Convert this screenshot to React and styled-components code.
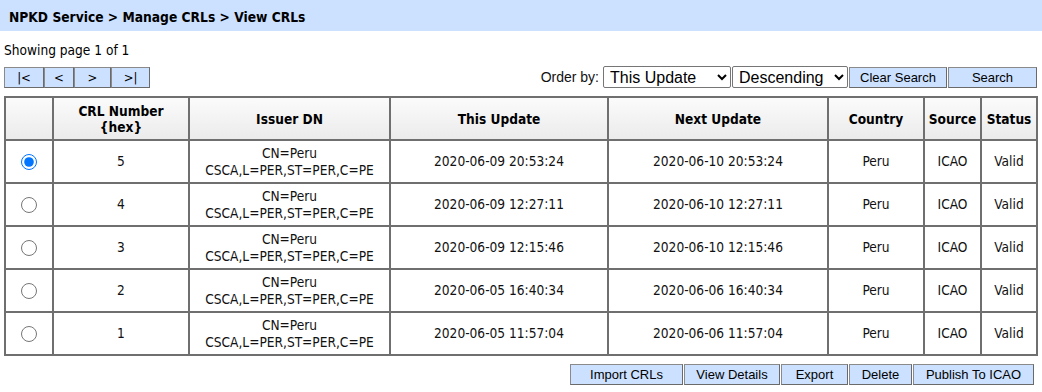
import React, { useState } from 'react';
import styled, { createGlobalStyle } from 'styled-components';

const GlobalStyle = createGlobalStyle`
  body {
    margin: 0;
    background: #fff;
    font-family: "DejaVu Sans Condensed", "DejaVu Sans", sans-serif;
    font-size: 13.6px;
    color: #000;
  }
`;

const rows = [
  { id: 5, issuer: ['CN=Peru', 'CSCA,L=PER,ST=PER,C=PE'], thisUpd: '2020-06-09 20:53:24', nextUpd: '2020-06-10 20:53:24' },
  { id: 4, issuer: ['CN=Peru', 'CSCA,L=PER,ST=PER,C=PE'], thisUpd: '2020-06-09 12:27:11', nextUpd: '2020-06-10 12:27:11' },
  { id: 3, issuer: ['CN=Peru', 'CSCA,L=PER,ST=PER,C=PE'], thisUpd: '2020-06-09 12:15:46', nextUpd: '2020-06-10 12:15:46' },
  { id: 2, issuer: ['CN=Peru', 'CSCA,L=PER,ST=PER,C=PE'], thisUpd: '2020-06-05 16:40:34', nextUpd: '2020-06-06 16:40:34' },
  { id: 1, issuer: ['CN=Peru', 'CSCA,L=PER,ST=PER,C=PE'], thisUpd: '2020-06-05 11:57:04', nextUpd: '2020-06-06 11:57:04' },
];

const columns = [
  { key: 'sel', label: '', width: 48 },
  { key: 'num', label: <>CRL Number<br />{'{hex}'}</>, width: 136 },
  { key: 'issuer', label: 'Issuer DN', width: 201 },
  { key: 'this', label: 'This Update', width: 218 },
  { key: 'next', label: 'Next Update', width: 220 },
  { key: 'country', label: 'Country', width: 96 },
  { key: 'source', label: 'Source', width: 57 },
  { key: 'status', label: 'Status', width: 56 },
];

function App() {
  const [selected, setSelected] = useState(5);

  return (
    <Page>
      <GlobalStyle />
      <TitleBar>NPKD Service &gt; Manage CRLs &gt; View CRLs</TitleBar>

      <PageInfo>Showing page 1 of 1</PageInfo>

      <Toolbar>
        <Pager>
          <BlueButton $w={40} $tight>|&lt;</BlueButton>
          <BlueButton $w={30} $tight>&lt;</BlueButton>
          <BlueButton $w={37} $tight>&gt;</BlueButton>
          <BlueButton $w={39} $tight>&gt;|</BlueButton>
        </Pager>
        <OrderBox>
          <OrderLabel>Order by:</OrderLabel>
          <Select $w={128} defaultValue="this">
            <option value="this">This Update</option>
            <option value="next">Next Update</option>
            <option value="num">CRL Number</option>
          </Select>
          <Select $w={116} defaultValue="desc">
            <option value="desc">Descending</option>
            <option value="asc">Ascending</option>
          </Select>
          <BlueButton $w={98}>Clear Search</BlueButton>
          <BlueButton $w={89}>Search</BlueButton>
        </OrderBox>
      </Toolbar>

      <Table>
        <colgroup>
          {columns.map((c) => (
            <col key={c.key} style={{ width: c.width }} />
          ))}
        </colgroup>
        <thead>
          <tr>
            {columns.map((c) => (
              <Th key={c.key}>{c.label}</Th>
            ))}
          </tr>
        </thead>
        <tbody>
          {rows.map((r) => (
            <tr key={r.id}>
              <Td>
                <Radio
                  type="radio"
                  name="crl"
                  checked={selected === r.id}
                  onChange={() => setSelected(r.id)}
                />
              </Td>
              <Td>{r.id}</Td>
              <Td>
                {r.issuer[0]}
                <br />
                {r.issuer[1]}
              </Td>
              <Td>{r.thisUpd}</Td>
              <Td>{r.nextUpd}</Td>
              <Td>Peru</Td>
              <Td>ICAO</Td>
              <Td>Valid</Td>
            </tr>
          ))}
        </tbody>
      </Table>

      <Actions>
        <BlueButton $w={113}>Import CRLs</BlueButton>
        <BlueButton $w={96}>View Details</BlueButton>
        <BlueButton $w={67}>Export</BlueButton>
        <BlueButton $w={63}>Delete</BlueButton>
        <BlueButton $w={121}>Publish To ICAO</BlueButton>
      </Actions>
    </Page>
  );
}

export default App;

const Page = styled.div`
  width: 1042px;
`;

const TitleBar = styled.div`
  height: 31px;
  background: #cce0ff;
  font-weight: bold;
  font-size: 13.7px;
  line-height: 34px;
  padding-left: 9px;
  color: #000;
`;

const PageInfo = styled.div`
  padding: 11px 4px 0;
  height: 17px;
  line-height: 17px;
`;

const Toolbar = styled.div`
  display: flex;
  justify-content: space-between;
  align-items: center;
  padding: 7px 5px 0 4px;
`;

const Pager = styled.div`
  display: flex;
`;

const OrderBox = styled.div`
  display: flex;
  align-items: center;
`;

const OrderLabel = styled.span`
  font-family: "Liberation Sans", Arial, sans-serif;
  font-size: 14px;
  margin-right: 4px;
  color: #111;
`;

const BlueButton = styled.button`
  width: ${(p) => p.$w}px;
  height: 21px;
  margin: 0 ${(p) => (p.$tight ? 0 : 1)}px 0 0;
  padding: 0;
  background: #cce0ff;
  border: 1px solid;
  border-color: #8a8a8a #6a6a6a #6a6a6a #8a8a8a;
  font-family: ${(p) =>
    p.$tight ? '"DejaVu Sans Condensed", "DejaVu Sans", sans-serif' : '"Liberation Sans", Arial, sans-serif'};
  font-size: 13px;
  color: #000;
  cursor: pointer;
  &:last-child {
    margin-right: 0;
  }
`;

const Select = styled.select`
  width: ${(p) => p.$w}px;
  height: 22px;
  margin-right: 1px;
  font-family: "Liberation Sans", Arial, sans-serif;
  font-size: 16px;
  border: 1px solid #767676;
  border-radius: 2px;
  background: #fff;
  color: #000;
  padding: 0 2px;
`;

const Table = styled.table`
  margin: 8px 0 0 4px;
  width: 1032px;
  table-layout: fixed;
  border-collapse: separate;
  border-spacing: 0;
  border: 1px solid #6f6f6f;
`;

const Th = styled.th`
  height: 41px;
  padding: 0;
  border: 1px solid #6f6f6f;
  background: linear-gradient(#fbfbfb, #ebebeb);
  font-weight: bold;
  font-size: 13.6px;
  line-height: 16px;
  text-align: center;
`;

const Td = styled.td`
  height: 41px;
  padding: 0;
  border: 1px solid #6f6f6f;
  background: #fff;
  font-size: 13.6px;
  line-height: 17px;
  text-align: center;
  color: #111;
`;

const Radio = styled.input`
  width: 16px;
  height: 16px;
  margin: 0;
  vertical-align: middle;
  accent-color: #0075ff;
`;

const Actions = styled.div`
  display: flex;
  justify-content: flex-end;
  padding: 8px 8px 0 0;
`;
